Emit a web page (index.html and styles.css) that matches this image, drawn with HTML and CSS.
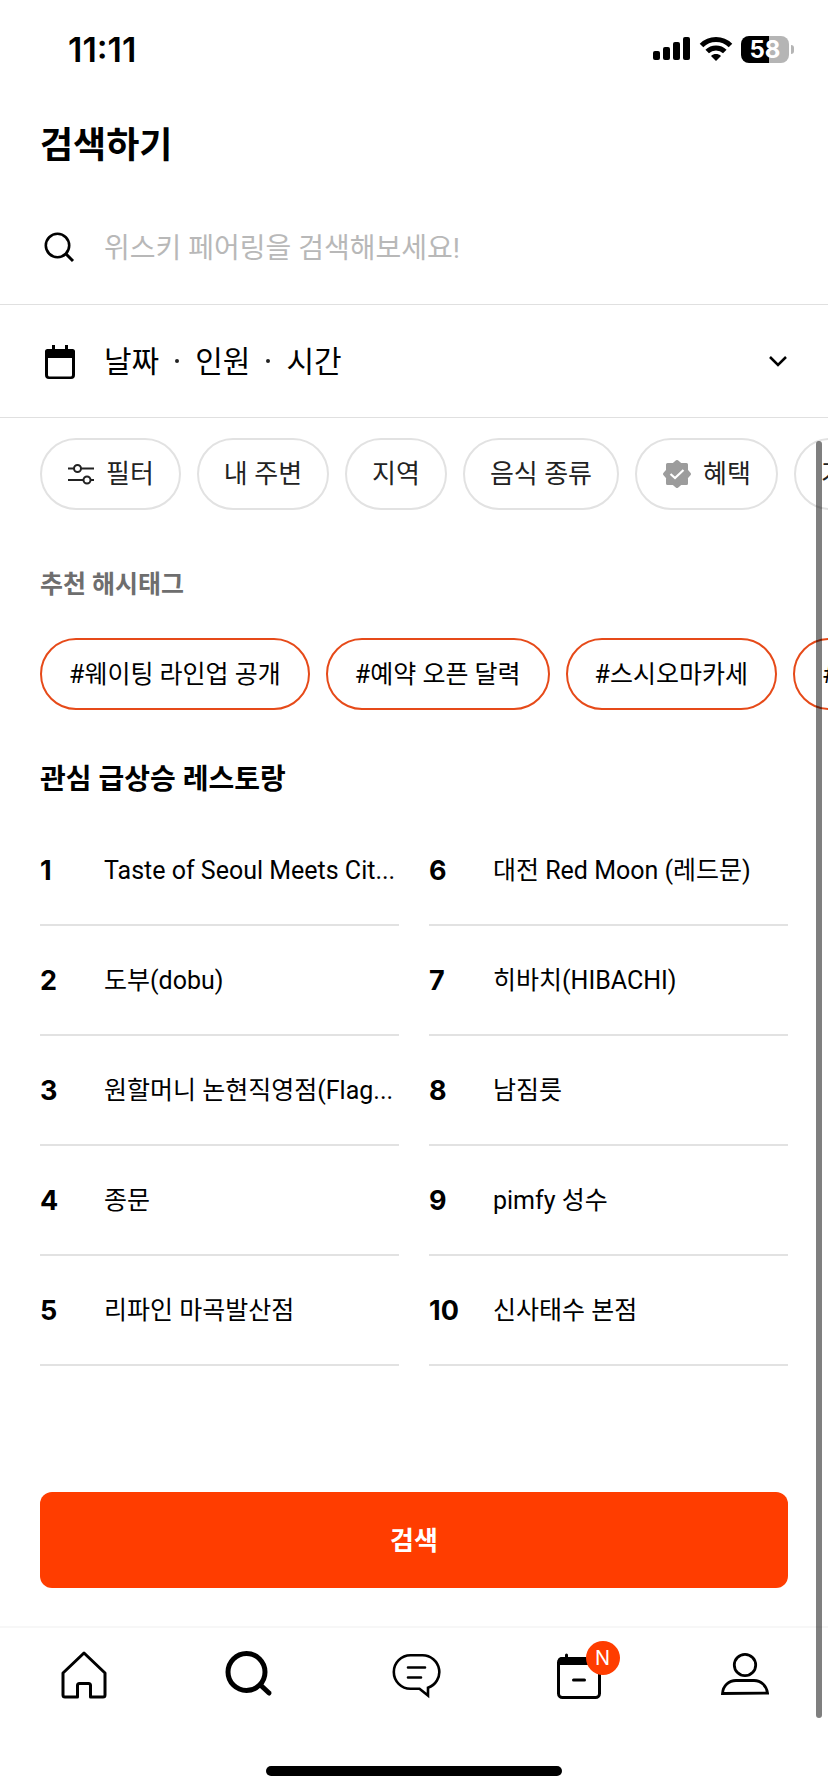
FILE: index.html
```html
<!DOCTYPE html>
<html lang="ko">
<head>
<meta charset="utf-8">
<meta name="viewport" content="width=device-width, initial-scale=1">
<title>검색하기</title>
<link rel="stylesheet" href="styles.css">
</head>
<body>
<div class="screen">
  <div class="status">
    <span class="status-time">11:11</span>
    <div class="status-icons">
      <svg width="38" height="24" viewBox="0 0 38 24" aria-hidden="true"><rect x="0" y="14" width="7" height="9" rx="2"/><rect x="10" y="10" width="7" height="13" rx="2"/><rect x="20" y="5" width="7" height="18" rx="2"/><rect x="30" y="0" width="7" height="23" rx="2"/></svg>
      <svg class="wifi" width="34" height="26" viewBox="0 0 34 26" aria-hidden="true"><path d="M2.5 9.5C10.500 1.500 23.500 1.500 31.500 9.500" fill="none" stroke="#000" stroke-width="5"/><path d="M8.200 15.500C13 10.700 21 10.700 25.800 15.500" fill="none" stroke="#000" stroke-width="5"/><path d="M17 25l-5-5c2.800-2.600 7.200-2.600 10 0z"/></svg>
      <div class="battery"><span class="battery-body">58</span><span class="battery-tip"></span></div>
    </div>
  </div>

  <header class="header"><h1 class="title">검색하기</h1></header>

  <label class="row search-row">
    <svg class="row-icon" viewBox="0 0 32 36" aria-label="검색어"><circle cx="13.500" cy="16.500" r="11.700" fill="none" stroke="#000" stroke-width="2.600"/><path d="M21.500 24.500l7.500 7.500" stroke="#000" stroke-width="3"/></svg>
    <input class="search-input" type="text" placeholder="위스키 페어링을 검색해보세요!">
  </label>

  <button class="row date-row" type="button">
    <svg class="row-icon" viewBox="0 0 32 36" aria-hidden="true"><path d="M1 8.500Q1 6 3.500 6H8V2h3v4h10V2h3v4h4.500Q31 6 31 8.500V32q0 4-4 4H5q-4 0-4-4zM4 15v17q0 1.500 1.500 1.500h21Q28 33.500 28 32V15z" fill-rule="evenodd"/></svg>
    <span class="date-text"><span>날짜</span><i class="dot"></i><span>인원</span><i class="dot"></i><span>시간</span></span>
    <svg width="20" height="14" viewBox="0 0 20 14" aria-hidden="true"><path d="M2 3l8 8 8-8" fill="none" stroke="#000" stroke-width="2.500"/></svg>
  </button>

  <main class="content">
    <div class="chips filters">
      <button class="chip" type="button"><svg width="28" height="24" viewBox="0 0 28 24" fill="none" stroke="#222" stroke-width="2" aria-hidden="true"><path d="M1 6.500h6M14 6.500h13M1 18h15.500M23.500 18H27"/><circle cx="10.500" cy="6.500" r="3.500"/><circle cx="20" cy="18" r="3.500"/></svg>필터</button>
      <button class="chip" type="button">내 주변</button>
      <button class="chip" type="button">지역</button>
      <button class="chip" type="button">음식 종류</button>
      <button class="chip" type="button"><svg width="30" height="30" viewBox="0 0 30 30" aria-hidden="true"><path d="M15 2.500l3.500 3H24.500V11.500L27.500 15l-3 3.500V24.500H18.500L15 27.500l-3.500-3H5.500V18.500L2.500 15l3-3.500V5.500H11.500z" fill="#9c9c9c" stroke="#9c9c9c" stroke-width="3" stroke-linejoin="round"/><path d="M8.500 15l4.500 4 8.500-8" fill="none" stroke="#fff" stroke-width="2.200"/></svg>혜택</button>
      <button class="chip" type="button">가격</button>
    </div>

    <h2 class="label">추천 해시태그</h2>
    <div class="chips">
      <button class="chip tag" type="button">#웨이팅 라인업 공개</button>
      <button class="chip tag" type="button">#예약 오픈 달력</button>
      <button class="chip tag" type="button">#스시오마카세</button>
      <button class="chip tag" type="button">#파인다이닝</button>
    </div>

    <h2 class="section-title">관심 급상승 레스토랑</h2>
    <ol class="ranks">
      <li class="rank"><b class="num">1</b><span class="name">Taste of Seoul Meets Cit...</span></li>
      <li class="rank"><b class="num">2</b><span class="name">도부(dobu)</span></li>
      <li class="rank"><b class="num">3</b><span class="name">원할머니 논현직영점(Flag...</span></li>
      <li class="rank"><b class="num">4</b><span class="name">종문</span></li>
      <li class="rank"><b class="num">5</b><span class="name">리파인 마곡발산점</span></li>
      <li class="rank"><b class="num">6</b><span class="name">대전 Red Moon (레드문)</span></li>
      <li class="rank"><b class="num">7</b><span class="name">히바치(HIBACHI)</span></li>
      <li class="rank"><b class="num">8</b><span class="name">남짐릇</span></li>
      <li class="rank"><b class="num">9</b><span class="name">pimfy 성수</span></li>
      <li class="rank"><b class="num">10</b><span class="name">신사태수 본점</span></li>
    </ol>
  </main>

  <div class="action"><button class="submit" type="button">검색</button></div>

  <nav class="tabs">
    <a class="tab" href="#home" aria-label="홈"><svg width="50" height="50" viewBox="0 0 50 50" fill="none" stroke="#000" stroke-width="3" stroke-linejoin="round"><path d="M26 4L47 24V46Q47 48 45 48H32.500V36.500q0-2-2-2h-9q-2 0-2 2V48H7Q5 48 5 46V24z"/></svg></a>
    <a class="tab" href="#search" aria-label="검색"><svg width="50" height="50" viewBox="0 0 50 50" fill="none" stroke="#000" stroke-width="5" stroke-linecap="round"><circle cx="23.500" cy="23" r="18.500"/><path d="M38 36.500l8 7.500"/></svg></a>
    <a class="tab" href="#talk" aria-label="톡"><svg width="54" height="50" viewBox="0 0 54 50" fill="none" stroke="#000" stroke-width="2.600" stroke-linecap="round"><path d="M23.500 6.300H35.500A16.700 16.700 0 0 1 41 38.800V46.500L32.500 39.700H23.500A16.700 16.700 0 0 1 23.500 6.300z"/><path d="M21 18.500H38M21 28.500H34"/></svg></a>
    <a class="tab" href="#booking" aria-label="예약"><svg width="50" height="50" viewBox="0 0 50 50" fill="none" stroke="#000" stroke-width="3" stroke-linecap="round"><rect x="3.500" y="9.500" width="41" height="39" rx="4"/><path d="M3 16V12q0-4 4-4h34q4 0 4 4v4z" fill="#000" stroke="none"/><path d="M11.500 6v4M36.500 6v4M18.500 31H29.500"/></svg><span class="badge">N</span></a>
    <a class="tab" href="#me" aria-label="마이"><svg width="50" height="50" viewBox="0 0 50 50" fill="none" stroke="#000" stroke-width="2.800"><circle cx="25" cy="16" r="10.700"/><path d="M2.500 44.500C3 36.500 9 31.500 16 31.500H34C41 31.500 46.500 36.500 47.500 44z"/></svg></a>
  </nav>
  <div class="home-bar"></div>
  <div class="scroll-thumb"></div>
</div>
</body>
</html>
```

FILE: styles.css
```css
* { box-sizing: border-box; }
body { margin: 0; background: #fff; color: #000; font-family: "Inter", "Noto Sans CJK KR", sans-serif; }
h1, h2, ol { margin: 0; padding: 0; }
button, input { font: inherit; color: inherit; border: 0; background: none; padding: 0; }
svg { display: block; flex: none; }

.screen { position: relative; display: flex; flex-direction: column; min-height: 100vh; overflow: hidden; }

.status { display: flex; align-items: center; justify-content: space-between; height: 98px; padding: 0 34px 0 68px; }
.status-time { font-size: 34px; font-weight: 600; }
.status-icons { display: flex; align-items: center; gap: 8px; }
.battery { display: flex; align-items: center; gap: 2px; }
.battery-body { width: 48px; height: 27px; border-radius: 8px; background: linear-gradient(90deg, #000 58%, #b5b5b5 58%); color: #fff; font-size: 24px; font-weight: 700; line-height: 27px; text-align: center; }
.battery-tip { width: 3px; height: 9px; border-radius: 0 4px 4px 0; background: #b5b5b5; }

.header { display: flex; align-items: center; height: 92px; padding: 2px 40px 0; }
.title { font-size: 36px; line-height: 48px; font-weight: 700; }

.row { display: flex; align-items: center; gap: 28px; width: 100%; padding: 0 40px 0 44px; border-bottom: 1px solid #e0e0e0; font-size: 30px; line-height: 40px; text-align: left; }
.search-row { height: 115px; }
.date-row { height: 113px; }
.row-icon { width: 32px; height: 36px; }
.search-input { flex: 1; min-width: 0; padding-top: 4px; outline: none; font-family: "Roboto", "Noto Sans CJK KR", sans-serif; font-size: 28px; }
.search-input::placeholder { color: #b8b8b8; opacity: 1; }
.date-text { display: flex; flex: 1; align-items: center; gap: 16px; }
.dot { width: 4px; height: 4px; border-radius: 2px; background: #222; }

.content { flex: 1; padding: 20px 0 0; }
.chips { display: flex; gap: 16px; padding: 0 0 0 40px; overflow: hidden; }
.chip { display: flex; flex: none; align-items: center; gap: 11px; height: 72px; padding: 0 25px; border: 2px solid #e2e2e2; border-radius: 36px; color: #222; font-family: "Roboto", "Noto Sans CJK KR", sans-serif; font-size: 26px; line-height: 36px; white-space: nowrap; }
.tag { padding: 2px 27px 0; border-color: #e64a19; color: #000; font-size: 25px; }
.label { padding: 54px 40px 34px; color: #6e6e6e; font-size: 25px; line-height: 40px; font-weight: 700; }
.section-title { padding: 50px 40px 16px; font-family: "Roboto", "Noto Sans CJK KR", sans-serif; font-size: 28px; line-height: 40px; font-weight: 700; }
.ranks { display: grid; grid-template-columns: repeat(2, minmax(0, 1fr)); grid-template-rows: repeat(5, 110px); grid-auto-flow: column; column-gap: 30px; padding: 0 40px; list-style: none; }
.rank { display: flex; align-items: center; padding-top: 2px; border-bottom: 2px solid #e2e2e2; font-size: 25px; line-height: 36px; }
.num { flex: none; width: 64px; font-size: 27px; font-weight: 700; }
.name { min-width: 0; font-family: "Roboto", "Noto Sans CJK KR", sans-serif; white-space: nowrap; }

.action { padding: 40px 40px 38px; }
.submit { display: block; width: 100%; height: 96px; padding-bottom: 4px; border-radius: 12px; background: #ff3d00; color: #fff; font-size: 26px; font-weight: 700; }

.tabs { display: grid; grid-template-columns: repeat(5, 1fr); height: 140px; padding-top: 21px; border-top: 2px solid #f7f7f7; }
.tab { position: relative; display: flex; justify-content: center; color: inherit; text-decoration: none; }
.badge { position: absolute; top: -8px; left: 50%; width: 34px; height: 34px; margin-left: 6px; border-radius: 17px; background: #ff3d00; color: #fff; font-size: 20px; line-height: 34px; text-align: center; }
.home-bar { width: 296px; height: 10px; margin: 0 auto 16px; border-radius: 5px; background: #000; }
.scroll-thumb { position: absolute; top: 441px; right: 6px; bottom: 74px; width: 6px; border-radius: 3px; background: rgba(0, 0, 0, .5); }
```
